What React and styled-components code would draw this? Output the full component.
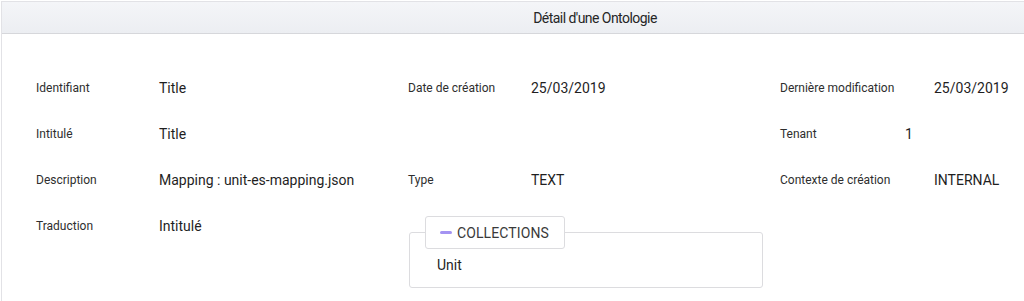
import React from 'react'
import styled, { createGlobalStyle } from 'styled-components'

const GlobalStyle = createGlobalStyle`
    body {
        margin: 0;
        background: #fff;
        font-family: Roboto, "Liberation Sans", Arial, sans-serif;
    }
`

const fields = [
    [
        { label: 'Identifiant', value: 'Title' },
        { label: 'Date de création', value: '25/03/2019' },
        { label: 'Dernière modification', value: '25/03/2019', width: 154 },
    ],
    [
        { label: 'Intitulé', value: 'Title' },
        null,
        { label: 'Tenant', value: '1', width: 125 },
    ],
    [
        { label: 'Description', value: 'Mapping : unit-es-mapping.json' },
        { label: 'Type', value: 'TEXT' },
        { label: 'Contexte de création', value: 'INTERNAL', width: 154 },
    ],
]

function App() {
    return (
        <Viewport>
            <GlobalStyle />
            <Panel>
                <Header>
                    <Title>Détail d'une Ontologie</Title>
                </Header>
                <Body>
                    {fields.map((row, i) =>
                        row.map((f, j) =>
                            f ? (
                                <Field key={`${i}-${j}`}>
                                    <Label $width={f.width || 123}>{f.label}</Label>
                                    <Value>{f.value}</Value>
                                </Field>
                            ) : (
                                <div key={`${i}-${j}`} />
                            )
                        )
                    )}
                    <Field>
                        <Label $width={123}>Traduction</Label>
                        <Value>Intitulé</Value>
                    </Field>
                    <Collections>
                        <Legend>
                            <Dash />
                            COLLECTIONS
                        </Legend>
                        <Item>Unit</Item>
                    </Collections>
                    <div />
                </Body>
            </Panel>
        </Viewport>
    )
}

const Viewport = styled.main`
    width: 100vw;
    height: 100vh;
    overflow: hidden;
`

const Panel = styled.section`
    width: 1188px;
    height: calc(100vh + 20px);
    margin: 1px 0 0 1px;
    border: 1px solid #e2e2e6;
    box-sizing: border-box;
    background: #fff;
`

const Header = styled.header`
    height: 31px;
    display: flex;
    align-items: center;
    justify-content: center;
    background: linear-gradient(#f4f5f8, #eceef2);
    border-bottom: 1px solid #d6d7db;
`

const Title = styled.h1`
    margin: 0;
    font-size: 14px;
    font-weight: 400;
    letter-spacing: -0.55px;
    color: #262626;
`

const Body = styled.div`
    display: grid;
    grid-template-columns: repeat(3, 372px);
    grid-auto-rows: min-content;
    row-gap: 28px;
    padding: 45px 0 0 34px;
    align-items: start;
`

const Field = styled.div`
    display: flex;
    align-items: center;
    height: 18px;
`

const Label = styled.span`
    width: ${p => p.$width}px;
    flex-shrink: 0;
    font-size: 12px;
    color: #2e2e2e;
`

const Value = styled.span`
    font-size: 14px;
    color: #1f1f1f;
    margin-top: -1px;
`

const Collections = styled.fieldset`
    margin: -1px 0 0 1px;
    padding: 0 0 14px 0;
    width: 354px;
    box-sizing: border-box;
    border: 1px solid #dcdcdf;
    border-radius: 3px;
    min-width: 0;
`

const Legend = styled.legend`
    margin-left: 15px;
    padding: 0 15px 0 14px;
    height: 31px;
    display: flex;
    align-items: center;
    gap: 5px;
    border: 1px solid #dcdcdf;
    border-radius: 3px;
    background: #fff;
    font-size: 14px;
    color: #3a3a3a;
    letter-spacing: 0.1px;
`

const Dash = styled.span`
    width: 12px;
    height: 3px;
    border-radius: 1.5px;
    background: #a493f2;
`

const Item = styled.div`
    padding: 8px 0 0 27px;
    font-size: 14px;
    line-height: 16px;
    color: #1f1f1f;
`

export default App
